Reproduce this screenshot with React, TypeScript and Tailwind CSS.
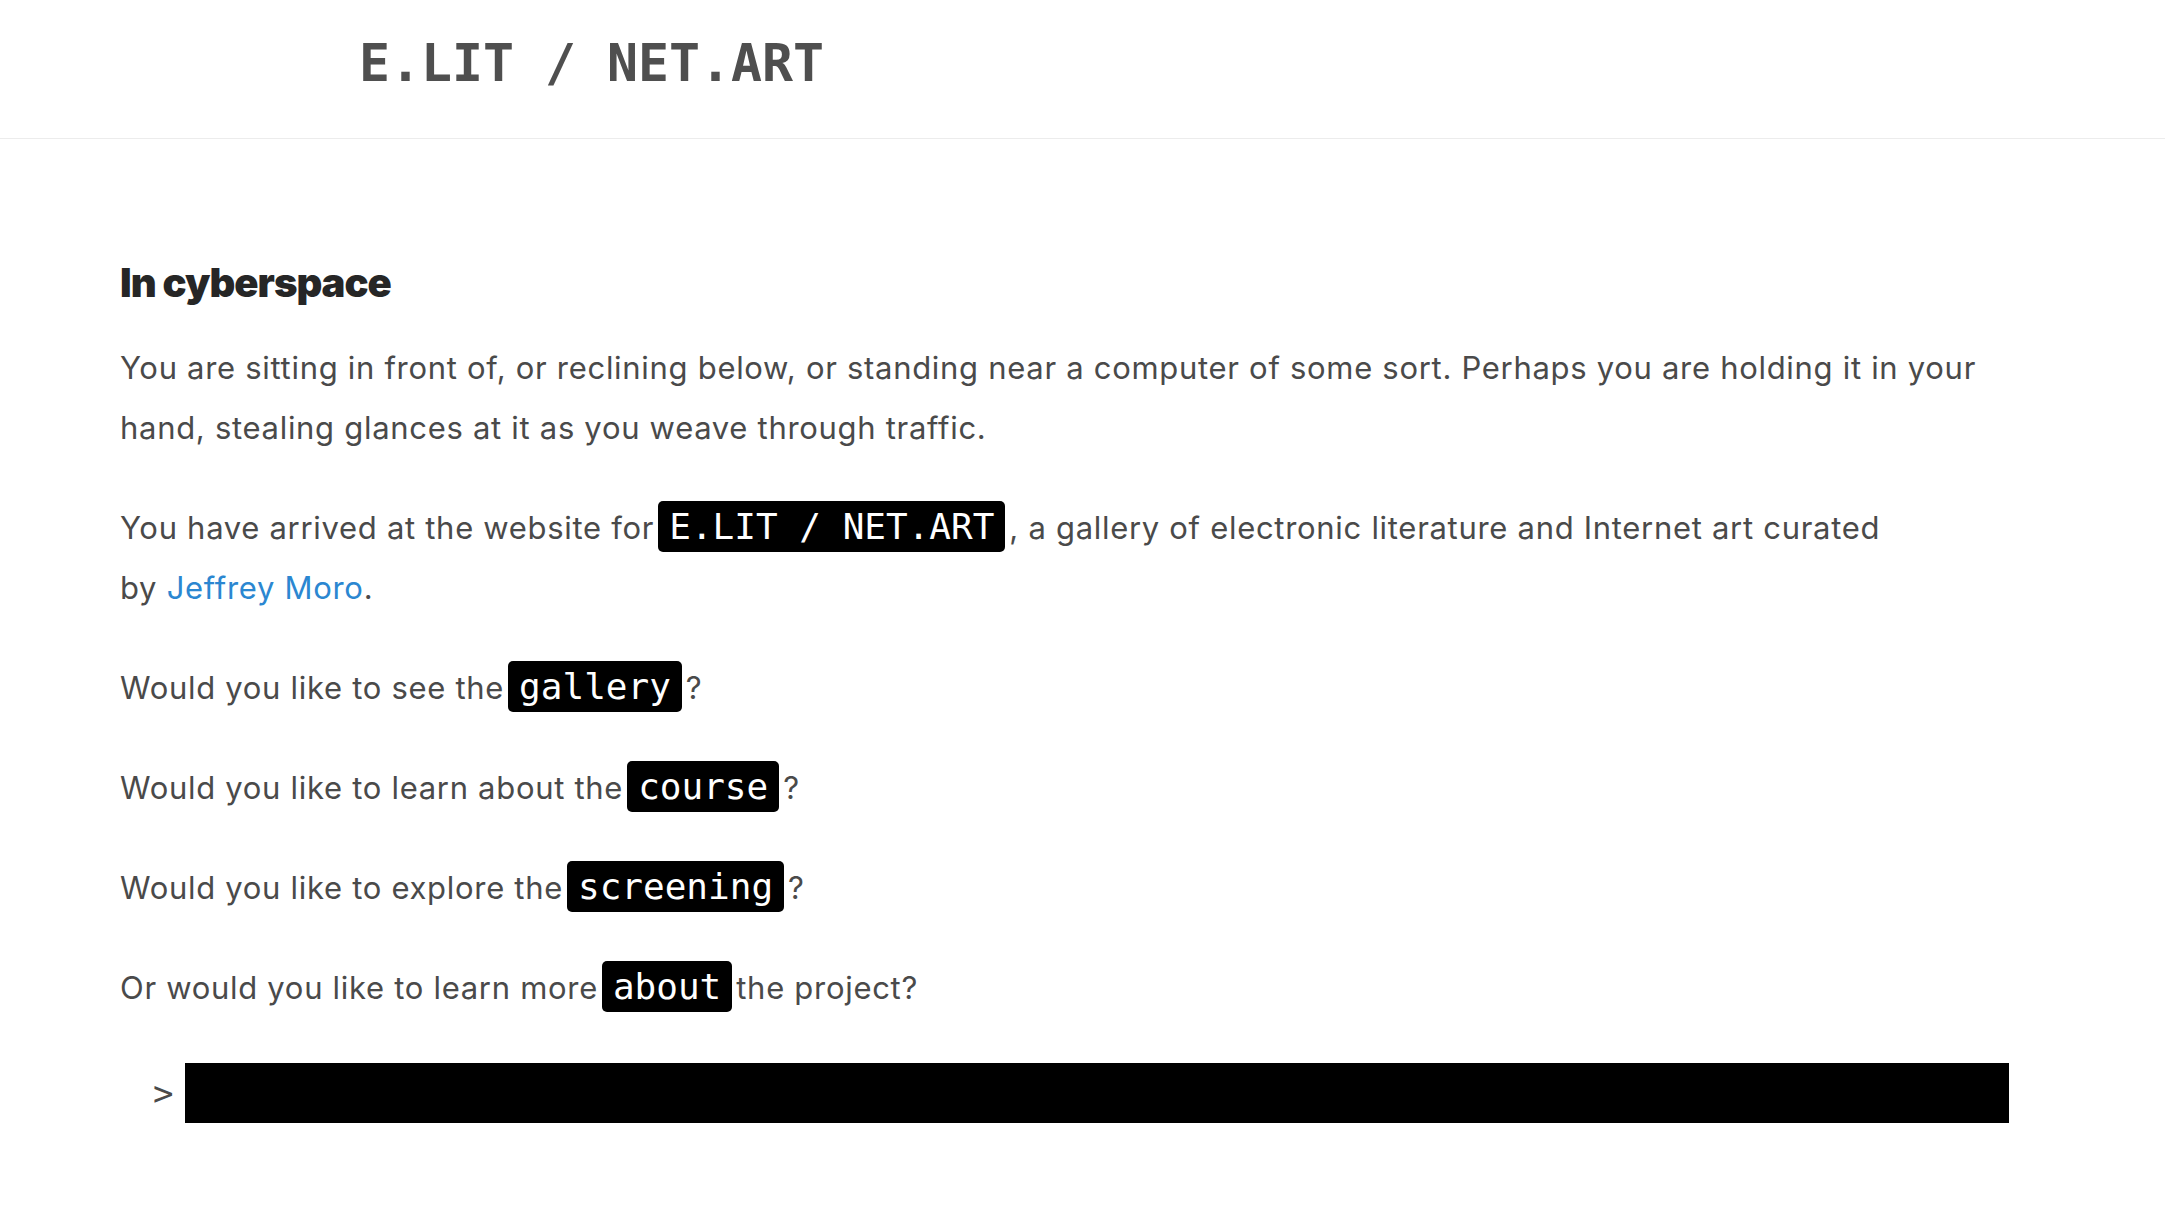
import React from 'react';

const Code: React.FC<{ children: React.ReactNode }> = ({ children }) => (
  <code className="mx-[4px] inline-block rounded-[5px] bg-black px-[11px] py-[4px] font-['DejaVu_Sans_Mono',monospace] text-[36px] leading-[43px] tracking-normal text-white">
    {children}
  </code>
);

const App: React.FC = () => {
  return (
    <div className="min-h-screen bg-white font-['Inter',sans-serif] text-[#4a4a4a]">
      <header className="h-[139px] border-b border-[#ececec] pl-[359px] pt-[31px]">
        <h1 className="font-['DejaVu_Sans_Mono',monospace] text-[51.5px] font-bold leading-[64px] text-[#4f4f4f]">
          E.LIT / NET.ART
        </h1>
      </header>

      <main className="px-[120px] pt-[120px]">
        <h2 className="text-[40px] font-black leading-[48px] tracking-tight text-[#262626]">
          In cyberspace
        </h2>

        <div className="mt-[31px] space-y-[40px] text-[31px] leading-[60px] tracking-[0.7px]">
          <p>
            You are sitting in front of, or reclining below, or standing near a computer of some sort. Perhaps you are holding it in your
            <br />
            hand, stealing glances at it as you weave through traffic.
          </p>
          <p>
            You have arrived at the website for<Code>E.LIT / NET.ART</Code>, a gallery of electronic literature and Internet art curated
            <br />
            by <a href="#" className="text-[#2b87d1]">Jeffrey Moro</a>.
          </p>
          <p>
            Would you like to see the<Code>gallery</Code>?
          </p>
          <p>
            Would you like to learn about the<Code>course</Code>?
          </p>
          <p>
            Would you like to explore the<Code>screening</Code>?
          </p>
          <p>
            Or would you like to learn more<Code>about</Code>the project?
          </p>
        </div>

        <div className="mt-[45px] flex items-center pr-[36px]">
          <span className="w-[65px] pl-[33px] font-['DejaVu_Sans_Mono',monospace] text-[34px] leading-[60px]">&gt;</span>
          <input
            type="text"
            aria-label="command"
            className="h-[60px] flex-1 bg-black px-4 text-[30px] text-white outline-none"
          />
        </div>
      </main>
    </div>
  );
};

export default App;
